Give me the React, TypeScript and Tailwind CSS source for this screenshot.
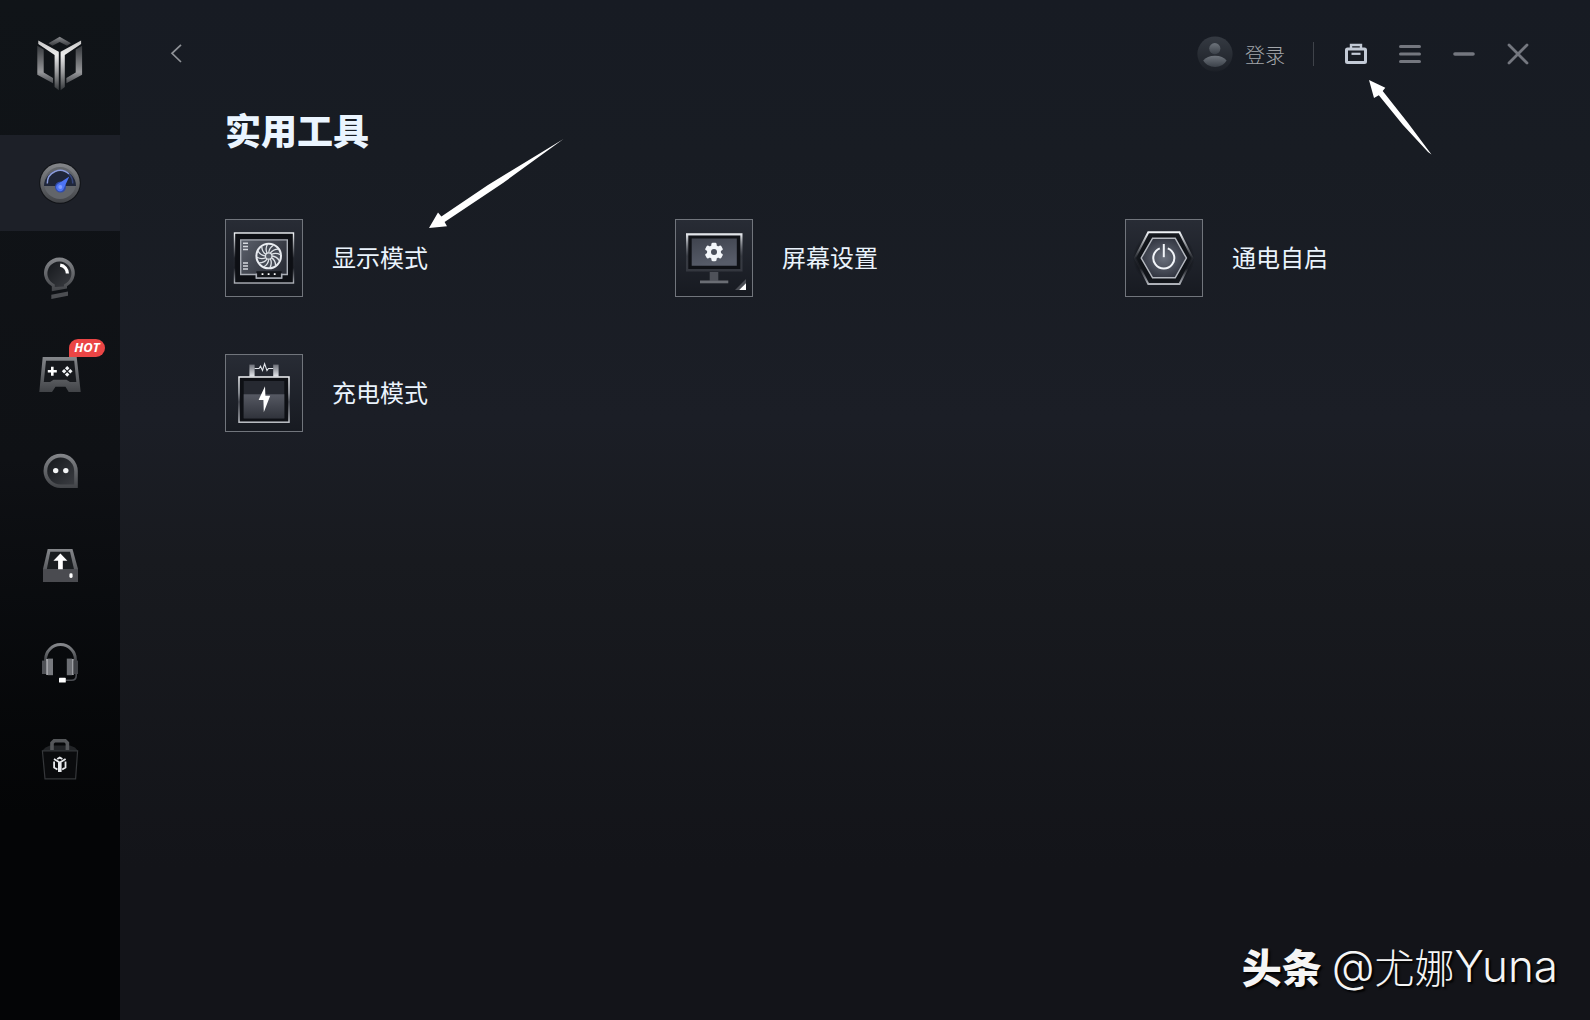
import type { ReactNode } from "react";

function Gradients() {
  return (
    <svg width="0" height="0" className="absolute" aria-hidden="true">
      <defs>
        <linearGradient id="metal" x1="0" y1="0" x2="0" y2="1">
          <stop offset="0" stopColor="#85878b" />
          <stop offset="1" stopColor="#414347" />
        </linearGradient>
        <linearGradient id="glass" x1="0" y1="0" x2="1" y2="1">
          <stop offset="0" stopColor="#15181c" />
          <stop offset="1" stopColor="#3a3c41" />
        </linearGradient>
        <linearGradient id="silver" gradientUnits="userSpaceOnUse" x1="0" y1="4" x2="0" y2="54">
          <stop offset="0" stopColor="#c4c4c4" />
          <stop offset="0.3" stopColor="#ededed" />
          <stop offset="0.65" stopColor="#98999b" />
          <stop offset="1" stopColor="#34373a" />
        </linearGradient>
        <linearGradient id="sideMetal" x1="0" y1="0" x2="0" y2="1">
          <stop offset="0" stopColor="#35383c" />
          <stop offset="0.7" stopColor="#97989b" />
          <stop offset="1" stopColor="#4a4c50" />
        </linearGradient>
        <linearGradient id="roof" x1="0" y1="0" x2="0" y2="1">
          <stop offset="0" stopColor="#8a8c8f" />
          <stop offset="1" stopColor="#37393d" />
        </linearGradient>
        <linearGradient id="frame" x1="0" y1="0" x2="0" y2="1">
          <stop offset="0" stopColor="#f1f4f8" />
          <stop offset="0.5" stopColor="#f1f4f8" stopOpacity="0.05" />
          <stop offset="0.7" stopColor="#b0b3ba" stopOpacity="0.05" />
          <stop offset="1" stopColor="#b0b3ba" />
        </linearGradient>
        <linearGradient id="caseFrame" x1="0" y1="0" x2="0" y2="1">
          <stop offset="0" stopColor="#f3f5f8" />
          <stop offset="0.35" stopColor="#a9adb4" />
          <stop offset="0.55" stopColor="#4b4e56" />
          <stop offset="1" stopColor="#c0c3c9" />
        </linearGradient>
        <linearGradient id="frameTop" x1="0" y1="0" x2="0" y2="1">
          <stop offset="0" stopColor="#f1f4f8" />
          <stop offset="0.6" stopColor="#6a6d75" stopOpacity="0.3" />
          <stop offset="1" stopColor="#4a4d55" stopOpacity="0.5" />
        </linearGradient>
        <linearGradient id="panel" x1="0" y1="0" x2="1" y2="0.6">
          <stop offset="0" stopColor="#5b606b" />
          <stop offset="1" stopColor="#2b2e37" />
        </linearGradient>
        <linearGradient id="screen" x1="0" y1="0" x2="0.3" y2="1">
          <stop offset="0" stopColor="#3f434e" />
          <stop offset="1" stopColor="#575c69" />
        </linearGradient>
        <linearGradient id="charge" x1="0" y1="0" x2="0" y2="1">
          <stop offset="0" stopColor="#565963" />
          <stop offset="1" stopColor="#30333b" />
        </linearGradient>
        <linearGradient id="terminal" x1="0" y1="0" x2="0" y2="1">
          <stop offset="0" stopColor="#6d7078" />
          <stop offset="1" stopColor="#e4e7ec" />
        </linearGradient>
        <radialGradient id="glow">
          <stop offset="0" stopColor="#6a707c" />
          <stop offset="1" stopColor="#343843" />
        </radialGradient>
        <radialGradient id="shade">
          <stop offset="0" stopColor="#06080b" />
          <stop offset="0.7" stopColor="#06080b" stopOpacity="0.8" />
          <stop offset="1" stopColor="#06080b" stopOpacity="0" />
        </radialGradient>
        <linearGradient id="avatar" x1="0" y1="0" x2="0" y2="1">
          <stop offset="0" stopColor="#353a42" />
          <stop offset="1" stopColor="#1c2027" />
        </linearGradient>
        <linearGradient id="person" x1="0" y1="0" x2="0" y2="1">
          <stop offset="0" stopColor="#6d737b" />
          <stop offset="1" stopColor="#3b4149" />
        </linearGradient>
      </defs>
    </svg>
  );
}

function BrandMark() {
  return (
    <svg width="48" height="56" viewBox="0 0 48 56" aria-hidden="true">
      <path d="M12.5 7.3 23.7.7 35 7.3 31 9.8 23.7 6 16.4 9.8Z" fill="url(#roof)" />
      <path d="M1.3 9.7 7.7 13.5V36.5L17 42V47.3L1.3 38.7Z" fill="url(#sideMetal)" />
      <path d="M46.1 9.7 39.7 13.5V36.5L30.4 42V47.3L46.1 38.7Z" fill="url(#sideMetal)" />
      <path d="M2.3 4.6 22.8 15.8V54.2L18.6 51V19L2.3 8Z" fill="url(#silver)" />
      <path d="M45.1 4.6 24.6 15.8V54.2L28.8 51V19L45.1 8Z" fill="url(#silver)" />
    </svg>
  );
}

function NavSvg({ children }: { children: ReactNode }) {
  return (
    <svg width="48" height="48" viewBox="0 0 48 48" fill="none" aria-hidden="true">
      {children}
    </svg>
  );
}

function GaugeIcon() {
  return (
    <NavSvg>
      <circle cx="24" cy="24" r="20.8" fill="#101216" />
      <circle cx="24" cy="24" r="19.8" fill="url(#metal)" />
      <circle cx="24" cy="24" r="16" fill="#62656a" />
      <path d="M8 27A16 16 0 1 1 40 27Z" fill="#1f2639" />
      <path d="M11.3 24.5A12.8 12.8 0 0 1 33 15" stroke="#8b9cdc" strokeWidth="1.5" />
      <path d="M33 15A12.8 12.8 0 0 1 36.7 24.5" stroke="#35457c" strokeWidth="1.5" />
      <circle cx="24.5" cy="28" r="5.5" fill="#304ba8" />
      <path d="M33.3 17.6 28 29A4 4 0 1 1 21.5 25.2Z" fill="#4d74f5" />
      <circle cx="24.3" cy="28" r="2" fill="#7f9bff" />
    </NavSvg>
  );
}

function BulbIcon() {
  return (
    <NavSvg>
      <path d="M15.8 36.2V31.3A15.4 15.4 0 1 1 31 31.3V33.6Z" fill="url(#metal)" />
      <path d="M18.8 32V29.5A12 12 0 1 1 28 29.5V31.4Z" fill="url(#glass)" />
      <path d="M24.2 10.2A8.4 8.4 0 0 1 31.4 18.6" stroke="#fff" strokeWidth="3.2" />
      <path d="M15.3 39.7 32 36.6V40.8L15.3 44Z" fill="#4c4e52" />
    </NavSvg>
  );
}

function GamepadIcon() {
  return (
    <NavSvg>
      <path d="M6.7 6H40.7L44.7 41H32.7L29.5 35.8H19.5L16 41H3.3Z" fill="url(#metal)" />
      <path d="M10 9.8H38.2L40.3 31H34L30.5 28.8H17.5L14 31H7.8Z" fill="#17191d" />
      <path d="M16.3 15.8V24.8M11.8 20.3H20.8" stroke="#fff" strokeWidth="2.6" />
      <g fill="#f4f6f8">
        <rect x="29.6" y="15.6" width="3.2" height="3.2" transform="rotate(45 31.2 17.2)" />
        <rect x="29.6" y="21.8" width="3.2" height="3.2" transform="rotate(45 31.2 23.4)" />
        <rect x="26.5" y="18.7" width="3.2" height="3.2" transform="rotate(45 28.1 20.3)" />
        <rect x="32.7" y="18.7" width="3.2" height="3.2" transform="rotate(45 34.3 20.3)" />
      </g>
    </NavSvg>
  );
}

function ChatIcon() {
  return (
    <NavSvg>
      <path d="M24.6 6.8A17.2 17.2 0 0 1 41.8 24V41H24.6A17.1 17.1 0 0 1 24.6 6.8Z" fill="url(#metal)" />
      <path d="M24.6 10.6A13.6 13.6 0 0 1 38.2 24.2V37.4H24.6A13.4 13.4 0 0 1 24.6 10.6Z" fill="url(#glass)" />
      <circle cx="19.7" cy="23.6" r="2.7" fill="#f4f5f6" />
      <circle cx="29.8" cy="23.6" r="2.7" fill="#f4f5f6" />
    </NavSvg>
  );
}

function UploadIcon() {
  return (
    <NavSvg>
      <path d="M11.7 6H36.5L42 26V39H7V26Z" fill="url(#metal)" />
      <path d="M14.3 8.8H34L38 26.2H10.8Z" fill="#1a1d20" />
      <path d="M7 26.2H42V39H7Z" fill="#4a4b50" />
      <path d="M24.4 10.4 31.4 17.8H26.8V26.3H22.1V17.8H17.4Z" fill="#fff" />
      <rect x="33.4" y="30.3" width="3.2" height="4.6" rx="1.4" fill="#fff" />
    </NavSvg>
  );
}

function HeadsetIcon() {
  return (
    <NavSvg>
      <path d="M9.6 22V20.5A14.8 14.8 0 0 1 39.4 20.5V22" stroke="url(#metal)" strokeWidth="3" />
      <rect x="6" y="21.6" width="4.4" height="13.4" fill="#4f5156" />
      <rect x="10.4" y="20" width="1.4" height="16" fill="#d8dade" />
      <rect x="11.8" y="19.6" width="5.2" height="16.6" fill="#77797e" />
      <rect x="30.8" y="19.6" width="5.4" height="16.6" fill="#6c6e73" />
      <rect x="36.2" y="20" width="1.4" height="16" fill="#bfc1c6" />
      <rect x="37.6" y="21.6" width="4.4" height="13.4" fill="#414348" />
      <path d="M40.2 34.6V36.8Q40.2 41.3 35.5 41.3H29.6" stroke="#4c4e53" strokeWidth="1.6" />
      <rect x="23" y="38.8" width="6.8" height="4.8" rx="0.6" fill="#fff" />
    </NavSvg>
  );
}

function BagIcon() {
  return (
    <NavSvg>
      <path d="M9.5 12.5 14 10.5H34L39 12.5 42 16H6Z" fill="#222427" />
      <path d="M16 15V8L18.2 5.8H29.2L31.4 8V15" stroke="#55575a" strokeWidth="3.6" />
      <path d="M6.4 15.8H41.6L39.6 43.8H9Z" fill="#0a0b0d" stroke="#35373a" strokeWidth="1.2" />
      <g stroke="#e9ebee" strokeWidth="1.8">
        <path d="M18 24.1 22.9 27.1V37M29.6 24.1 24.7 27.1V37" />
        <path d="M18.1 26.6V32.4L21.4 34.4M29.5 26.6V32.4L26.2 34.4M21.2 24 23.8 22.6 26.4 24" />
      </g>
    </NavSvg>
  );
}

function Tile({ children }: { children: ReactNode }) {
  return (
    <span className="block size-[78px] shrink-0 border border-[#71757c] bg-linear-to-b from-[#282c35] to-[#171a21]">
      <svg width="76" height="76" viewBox="1 1 76 76" fill="none" aria-hidden="true">
        {children}
      </svg>
    </span>
  );
}

const blades = [0, 30, 60, 90, 120, 150, 180, 210, 240, 270, 300, 330];

function GraphicsCardTile() {
  return (
    <Tile>
      <rect x="9.5" y="14" width="59" height="50" fill="#0d0f14" />
      <rect x="9.5" y="14" width="59" height="50" stroke="url(#frame)" strokeWidth="1.4" />
      <path
        d="M15.7 20.9H62.3V55.5H56.6V59H31.4V55.5H15.7Z"
        fill="url(#panel)"
        stroke="#a9adb5"
        strokeWidth="1.4"
      />
      <path d="M31.4 52.2H56.6V59H31.4Z" fill="#14161b" />
      <path d="M31.4 54.5V59H56.6V54.5" stroke="#a9adb5" strokeWidth="1.4" />
      <path
        d="M18 24.3H23M18 27.4H23M18 30.5H23M18 43.9H23M18 47H23M18 50.1H23"
        stroke="#d5d8dd"
        strokeWidth="1.5"
      />
      <path d="M36.6 55.2H38.4M42.7 55.2H44.5M48.8 55.2H50.6" stroke="#fff" strokeWidth="1.8" />
      <circle cx="43.7" cy="37" r="12.3" fill="#454a55" stroke="#e9ecf1" strokeWidth="2" />
      {blades.map((angle) => (
        <path
          key={angle}
          d="M43.7 33.8Q44 29 48.5 26.2"
          stroke="#dfe3e8"
          strokeWidth="1.3"
          transform={`rotate(${angle} 43.7 37)`}
        />
      ))}
      <circle cx="43.7" cy="37" r="3.2" fill="#565b66" stroke="#dfe3e8" strokeWidth="1.2" />
    </Tile>
  );
}

function ScreenTile() {
  return (
    <Tile>
      <path d="M34.7 53H43.3V61.7H34.7Z" fill="#4e5159" />
      <path d="M25 61.5H53.3V64.3H25Z" fill="#6a6d74" />
      <path d="M11 14.2H67.5V52.5H11Z" fill="url(#frameTop)" />
      <path d="M13.3 16.4H65.3V50H13.3Z" fill="#0f1116" />
      <path d="M16.7 19.4H61.8V46.8H16.7Z" fill="url(#screen)" />
      <g fill="#f3f6fa">
        <circle cx="39" cy="33" r="7" />
        {[0, 60, 120].map((angle) => (
          <rect
            key={angle}
            x="36.4"
            y="23.8"
            width="5.2"
            height="18.4"
            rx="1.4"
            transform={`rotate(${angle} 39 33)`}
          />
        ))}
      </g>
      <circle cx="39" cy="33" r="3" fill="#4b505c" />
      <path d="M71 60V71H60Z" fill="#4a4d54" />
      <path d="M71 64.2V71H64.2Z" fill="#fff" />
    </Tile>
  );
}

function PowerTile() {
  return (
    <Tile>
      <ellipse cx="38.7" cy="39" rx="31" ry="28" fill="url(#shade)" />
      <path
        d="M10 39 23.3 13.2H54.5L67.5 39 54.5 65H23.3Z"
        fill="#13161b"
        fillOpacity="0.6"
        stroke="url(#frame)"
        strokeWidth="2"
      />
      <path
        d="M16.2 39 27.6 19.2H50.2L61.4 39 50.2 58.8H27.6Z"
        fill="url(#glow)"
        stroke="#b4b8bf"
        strokeWidth="1.5"
      />
      <path d="M34.8 29.3A10.5 10.5 0 1 0 42.8 29.3" stroke="#f2f5f9" strokeWidth="2" />
      <path d="M38.8 25V38.2" stroke="#f2f5f9" strokeWidth="2" />
    </Tile>
  );
}

function BatteryTile() {
  return (
    <Tile>
      <path d="M24.4 10.6H29.6V22.5H24.4Z" fill="url(#terminal)" />
      <path d="M48.2 10.6H53.6V22.5H48.2Z" fill="url(#terminal)" />
      <path
        d="M29.6 14.5H34L35.5 12.2 37.5 16.4 39.6 9.8 42 16.6 43.5 14.5H48.2"
        stroke="#e2e5ea"
        strokeWidth="1.1"
      />
      <rect x="14" y="23" width="50" height="45.2" fill="#0e1015" stroke="url(#caseFrame)" strokeWidth="1.5" />
      <rect x="18.7" y="27" width="40.6" height="37.4" fill="#262931" />
      <rect x="18.7" y="40.3" width="40.6" height="24.1" fill="url(#charge)" />
      <path d="M40 32.3 33.6 46H38.4L38.8 58.3 45.2 41.8H40.4Z" fill="#fff" />
    </Tile>
  );
}

const navItems = [
  { label: "控制台", icon: <GaugeIcon /> },
  { label: "灯效", icon: <BulbIcon /> },
  { label: "游戏", icon: <GamepadIcon />, hot: true },
  { label: "社区", icon: <ChatIcon /> },
  { label: "驱动更新", icon: <UploadIcon /> },
  { label: "客服", icon: <HeadsetIcon /> },
  { label: "商城", icon: <BagIcon /> },
];

const tools = [
  { label: "显示模式", tile: <GraphicsCardTile /> },
  { label: "屏幕设置", tile: <ScreenTile /> },
  { label: "通电自启", tile: <PowerTile /> },
  { label: "充电模式", tile: <BatteryTile /> },
];

function Sidebar() {
  return (
    <nav className="w-[120px] shrink-0 bg-linear-to-b from-[#101418] from-0% via-[#0f1115] via-45% to-[#040506] to-80%">
      <div className="flex h-[135px] items-center justify-center pb-2">
        <BrandMark />
      </div>
      {navItems.map((item, i) => (
        <button
          key={item.label}
          type="button"
          aria-label={item.label}
          className={
            i === 0
              ? "relative flex h-24 w-full items-center justify-center bg-[#1d2028]"
              : "relative flex h-24 w-full items-center justify-center"
          }
        >
          {item.icon}
          {item.hot && (
            <span className="absolute top-3 left-[69px] flex h-[18px] w-9 items-center justify-center rounded-full rounded-bl-none bg-[#ea4545] font-['Open_Sans'] text-[13px] font-bold text-white italic">
              HOT
            </span>
          )}
        </button>
      ))}
    </nav>
  );
}

function Header() {
  return (
    <header className="relative flex h-[108px] items-center pr-[45px] pl-8">
      <button type="button" aria-label="返回" className="flex size-12 items-center justify-center">
        <svg width="12" height="20" viewBox="0 0 12 20" fill="none" aria-hidden="true">
          <path d="M11 .8 2 9.3 11 18" stroke="#8f9297" strokeWidth="1.7" />
        </svg>
      </button>
      <button
        type="button"
        className="mr-7 ml-auto flex items-center gap-3 text-[20px] leading-9 font-light text-[#a3a6ab]"
      >
        <svg width="36" height="36" viewBox="0 0 36 36" aria-hidden="true">
          <circle cx="18" cy="18" r="17.6" fill="url(#avatar)" />
          <circle cx="17.8" cy="12.6" r="5.6" fill="url(#person)" />
          <path d="M6.2 24.5Q10 19.8 18 19.8T29.6 24.5Q26 31 18 31T6.2 24.5Z" fill="url(#person)" />
        </svg>
        <span className="pt-0.5">登录</span>
      </button>
      <span className="mr-[15px] h-6 w-px bg-[#3f434a]" />
      <button type="button" aria-label="工具箱" className="flex h-12 w-[54px] items-center justify-center">
        <svg width="22" height="22" viewBox="0 0 22 22" fill="none" stroke="#c3cad6" aria-hidden="true">
          <path d="M6 6V2H16V6" strokeWidth="2.4" />
          <rect x="1.5" y="6" width="19" height="13.4" rx="1" strokeWidth="3" />
          <path d="M6.5 10.8H15.5" strokeWidth="2.2" />
        </svg>
      </button>
      <button type="button" aria-label="菜单" className="flex h-12 w-[54px] items-center justify-center">
        <svg
          width="22"
          height="20"
          viewBox="0 0 22 20"
          stroke="#74777f"
          strokeWidth="3"
          strokeLinecap="round"
          aria-hidden="true"
        >
          <path d="M1.5 2.4H20.5M1.5 9.9H20.5M1.5 17.6H20.5" />
        </svg>
      </button>
      <button type="button" aria-label="最小化" className="flex h-12 w-[54px] items-center justify-center">
        <svg
          width="22"
          height="20"
          viewBox="0 0 22 20"
          stroke="#74777f"
          strokeWidth="3.6"
          strokeLinecap="round"
          aria-hidden="true"
        >
          <path d="M2 10H20" />
        </svg>
      </button>
      <button type="button" aria-label="关闭" className="flex h-12 w-[54px] items-center justify-center">
        <svg
          width="22"
          height="22"
          viewBox="0 0 22 22"
          stroke="#74777f"
          strokeWidth="2.8"
          strokeLinecap="round"
          aria-hidden="true"
        >
          <path d="M2 2 20 20M20 2 2 20" />
        </svg>
      </button>
      <svg
        width="64"
        height="76"
        viewBox="0 0 64 76"
        className="absolute top-[80px] right-[158px]"
        aria-hidden="true"
      >
        <path d="M1 0 17.3 7.8 14.7 11 40 43 63.5 74.5 60 72 35 45 10.8 15.3 6 18Z" fill="#fff" />
      </svg>
    </header>
  );
}

export default function App() {
  return (
    <div className="flex min-h-screen bg-[#15171c] font-['Noto_Sans_CJK_SC','Noto_Sans',sans-serif]">
      <Gradients />
      <Sidebar />
      <main className="relative flex min-w-0 flex-1 flex-col bg-[linear-gradient(to_bottom,#171b23_0%,#181c23_15%,#1b1e26_41%,#181a1f_55%,#131419_85%)]">
        <Header />
        <section className="relative pr-[15px] pl-[105px]">
          <h1 className="pb-1 text-[36px] leading-[42px] font-black text-[#ebf5ff]">实用工具</h1>
          <svg
            width="136"
            height="92"
            viewBox="0 0 136 92"
            className="absolute top-[30px] left-[308px]"
            aria-hidden="true"
          >
            <path d="M1 90 10 74.5 13.4 78.6 60 47 135.5 1 75 45 16.6 84 19 88.2Z" fill="#fff" />
          </svg>
          <div className="mt-[65px] grid grid-cols-3 gap-y-[57px]">
            {tools.map((tool) => (
              <button
                key={tool.label}
                type="button"
                className="flex items-center gap-[29px] text-[24px] leading-8 text-[#eaf3fc]"
              >
                {tool.tile}
                <span className="pb-0.5">{tool.label}</span>
              </button>
            ))}
          </div>
        </section>
        <p className="mt-auto mr-8 mb-6 flex items-center gap-2.5 self-end text-[40px] leading-[60px] text-[#f5f5f5] [text-shadow:2px_2px_2px_#000]">
          <span className="font-black">头条</span>
          <span className="flex items-center font-light">
            <span className="font-['Inter'] text-[44px]">@</span>
            尤娜
            <span className="font-['Inter'] text-[44px]">Yuna</span>
          </span>
        </p>
      </main>
    </div>
  );
}
